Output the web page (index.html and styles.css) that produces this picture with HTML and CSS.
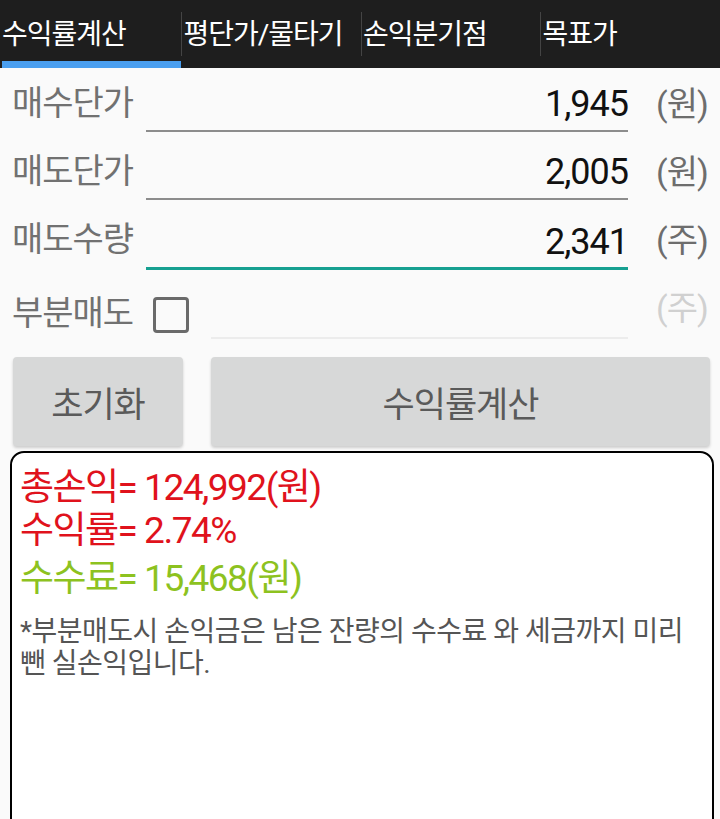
FILE: index.html
```html
<!DOCTYPE html>
<html>
<head>
    <title>수익률계산</title>
    <link rel="stylesheet" href="styles.css">
</head>
<body>
    <div class="tabs">
        <div class="tab active">수익률계산</div>
        <div class="tab">평단가/물타기</div>
        <div class="tab">손익분기점</div>
        <div class="tab">목표가</div>
    </div>

    <div class="form">
        <div class="row">
            <span class="label">매수단가</span>
            <div class="field">1,945</div>
            <span class="unit">(원)</span>
        </div>
        <div class="row">
            <span class="label">매도단가</span>
            <div class="field">2,005</div>
            <span class="unit">(원)</span>
        </div>
        <div class="row">
            <span class="label">매도수량</span>
            <div class="field focused">2,341</div>
            <span class="unit">(주)</span>
        </div>
        <div class="row partial">
            <span class="label">부분매도</span>
            <span class="checkbox"></span>
            <div class="field disabled"></div>
            <span class="unit faded">(주)</span>
        </div>
    </div>

    <div class="buttons">
        <button type="button" class="btn reset">초기화</button>
        <button type="button" class="btn calc">수익률계산</button>
    </div>

    <div class="result">
        <div class="line red">총손익= 124,992(원)</div>
        <div class="line red">수익률= 2.74%</div>
        <div class="line green">수수료= 15,468(원)</div>
        <p class="note">*부분매도시 손익금은 남은 잔량의 수수료 와 세금까지 미리 뺀 실손익입니다.</p>
    </div>
</body>
</html>
```

FILE: styles.css
```css
html, body {
    height: 819px;
    overflow: hidden;
}

body {
    margin: 0;
    background-color: #fafafa;
    font-family: Roboto, "Noto Sans CJK KR", sans-serif;
}

.tabs {
    display: flex;
    height: 68px;
    background-color: #1e1e1e;
    padding-left: 2px;
}

.tab {
    width: 181px;
    height: 68px;
    color: #fff;
    font-size: 28px;
    line-height: 70px;
    box-sizing: border-box;
    white-space: nowrap;
    letter-spacing: -1px;
    padding-left: 2px;
    background: linear-gradient(#444, #444) left 12px / 1px 44px no-repeat;
}

.tab.active {
    padding-left: 0;
    background: none;
    border-bottom: 7px solid #4a9ff0;
}

.form {
    padding-top: 2px;
}

.row {
    display: flex;
    align-items: flex-end;
    height: 68px;
}

.label {
    width: 146px;
    padding-left: 12px;
    box-sizing: border-box;
    font-size: 34px;
    color: #717171;
    line-height: 70px;
    letter-spacing: -1px;
    white-space: nowrap;
}

.field {
    width: 482px;
    height: 52px;
    border-bottom: 2px solid #8c8c8c;
    text-align: right;
    font-size: 36px;
    color: #111;
    line-height: 52px;
    margin-bottom: 6px;
    letter-spacing: -1px;
}

.field.focused {
    border-bottom: 3px solid #16a091;
    height: 51px;
    margin-bottom: 4px;
}

.field.disabled {
    width: 417px;
    height: 60px;
    border-bottom: 2px solid #ececec;
    margin-bottom: 3px;
}

.unit {
    margin-left: 28px;
    font-size: 34px;
    color: #6d6d6d;
    line-height: 68px;
    letter-spacing: -1px;
}

.unit.faded {
    color: #d0d0d0;
}

.partial .label {
    align-self: flex-start;
    line-height: 78px;
}

.checkbox {
    width: 30px;
    height: 30px;
    border: 3px solid #6a6a6a;
    border-radius: 4px;
    margin: 0 22px 9px 7px;
}

.buttons {
    display: flex;
    gap: 28px;
    padding: 15px 10px 0 13px;
}

.btn {
    height: 89px;
    background-color: #d7d8d8;
    border: none;
    border-radius: 4px;
    box-shadow: 0 2px 3px rgba(0, 0, 0, 0.18);
    font-family: Roboto, "Noto Sans CJK KR", sans-serif;
    font-size: 35px;
    color: #5a5a5a;
    letter-spacing: -1px;
}

.btn.reset {
    width: 170px;
}

.btn.calc {
    flex: 1;
}

.result {
    margin: 5px 6px 0 10px;
    height: 400px;
    border: 2px solid #000;
    border-radius: 14px;
    background-color: #fff;
    padding: 13px 16px 10px 8px;
}

.line {
    font-size: 37px;
    line-height: 43px;
    letter-spacing: -1.5px;
}

.red {
    color: #e0121c;
}

.green {
    color: #8dc21f;
    margin-top: 5px;
}

.note {
    margin: 16px 0 0;
    font-size: 28px;
    line-height: 32px;
    color: #555;
    letter-spacing: -0.5px;
}
```
